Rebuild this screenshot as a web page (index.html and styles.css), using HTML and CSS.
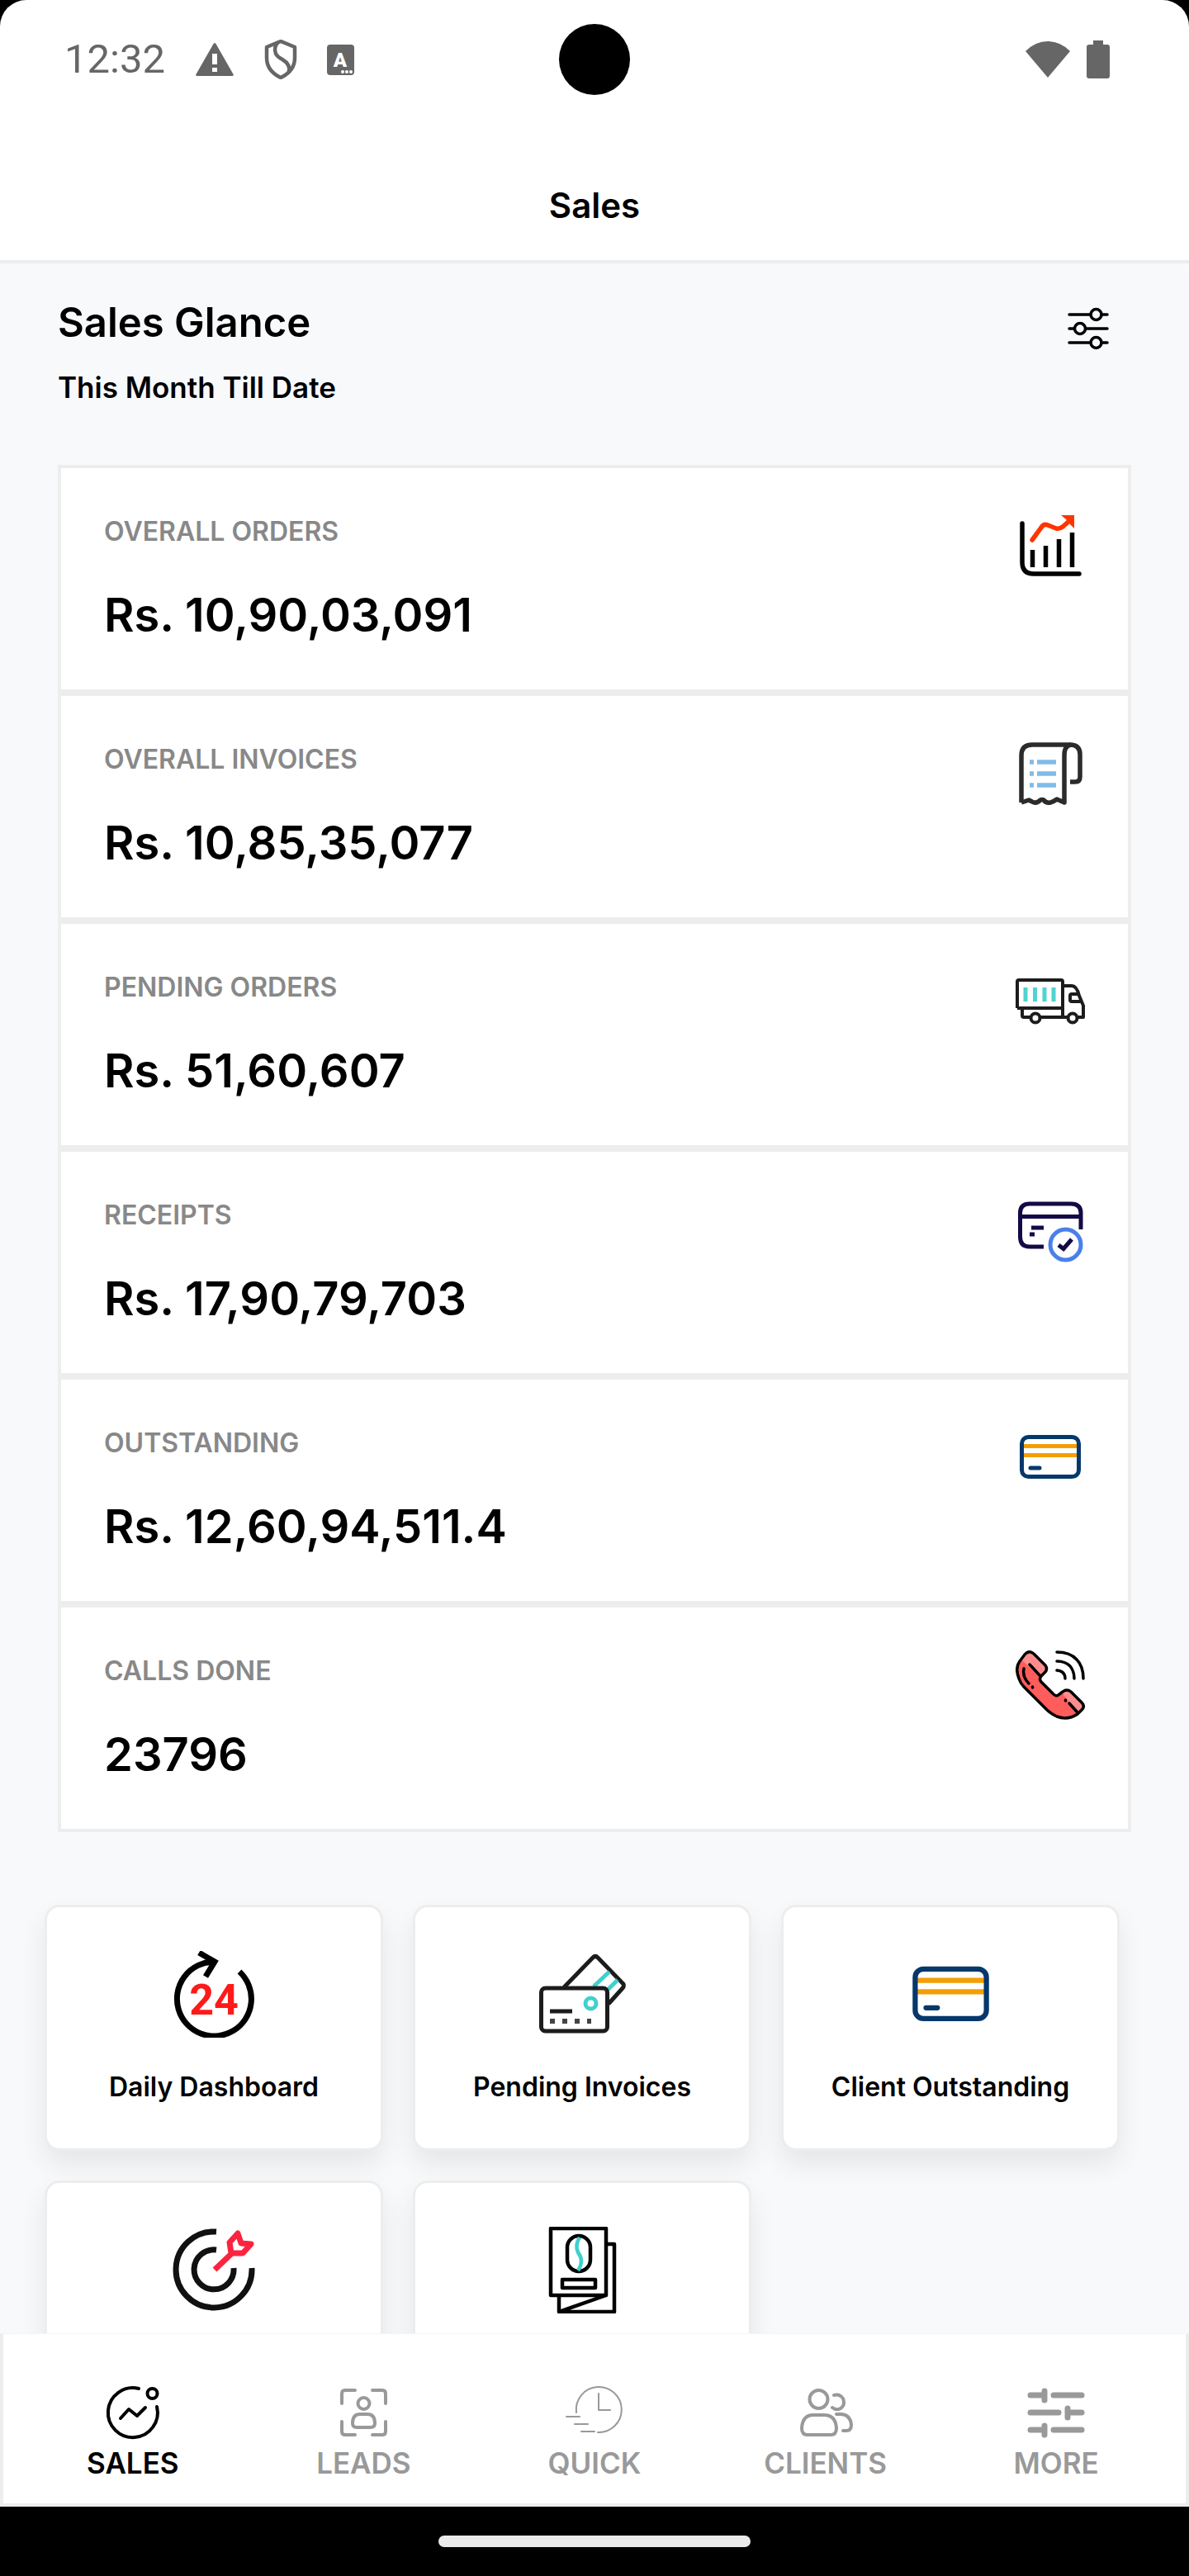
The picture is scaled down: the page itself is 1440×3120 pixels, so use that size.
FILE: index.html
```html
<!DOCTYPE html>
<html lang="en">
<head>
    <meta charset="utf-8">
    <title>Sales</title>
    <meta name="viewport" content="width=device-width, initial-scale=1.0">
    <link rel="stylesheet" href="styles.css">
</head>
<body>
    <!-- shared by the outstanding row and tile -->
    <svg class="sprite" aria-hidden="true">
        <symbol id="credit-card" viewBox="0 0 84 84">
            <path d="M9 28.5H75M9 39.5H75" stroke="#f29f05" stroke-width="5"/>
            <rect x="7.5" y="17.5" width="69" height="48" rx="8" fill="none" stroke="#05386b" stroke-width="5"/>
            <path d="M18 55H29" stroke="#05386b" stroke-width="5" stroke-linecap="round"/>
        </symbol>
    </svg>

    <header class="top">
        <div class="status">
            <span class="time">12:32</span>
            <div class="status-icons">
                <svg width="48" height="44" viewBox="0 0 48 44">
                    <path d="M24 2Q25 2 26 4L46 39Q48 42 45 42H3Q0 42 2 39L22 4Q23 2 24 2Z" fill="#666"/>
                    <path d="M24 15V28M24 32V37" stroke="#fff" stroke-width="6"/>
                </svg>
                <svg width="40" height="48" viewBox="0 0 40 48">
                    <path d="M20 2L37 9V22Q37 38 20 46Q3 38 3 22V9Z" fill="none" stroke="#666" stroke-width="4.5" stroke-linejoin="round"/>
                    <path d="M17 3Q11 9 14 17Q16 21 22 24Q32 30 30 39" fill="none" stroke="#666" stroke-width="4.5"/>
                </svg>
                <svg width="33" height="37" viewBox="0 0 33 37">
                    <rect width="33" height="37" rx="4" fill="#666"/>
                    <text x="16" y="27" class="badge-letter">A</text>
                    <g fill="#fff"><circle cx="19" cy="33" r="2"/><circle cx="24" cy="33" r="2"/><circle cx="29" cy="33" r="2"/></g>
                </svg>
            </div>
            <span class="camera"></span>
            <div class="status-right">
                <svg width="54" height="46" viewBox="0 0 54 46">
                    <path d="M27 45L0 13Q12 1 27 1Q42 1 54 13Z" fill="#666"/>
                </svg>
                <svg width="28" height="46" viewBox="0 0 28 46">
                    <path d="M8 0H20V5H25Q28 5 28 8V43Q28 46 25 46H3Q0 46 0 43V8Q0 5 3 5H8Z" fill="#666"/>
                </svg>
            </div>
        </div>
        <h1 class="title">Sales</h1>
    </header>

    <main>
        <section class="glance">
            <div>
                <h2>Sales Glance</h2>
                <p class="period">This Month Till Date</p>
            </div>
            <button class="filter" aria-label="Filter">
                <svg width="50" height="52" viewBox="0 0 50 52" fill="none" stroke="#000" stroke-width="3.5" stroke-linecap="round">
                    <path d="M2 9H28M41 9H48M2 26H8M22 26H48M2 43H28M41 43H48"/>
                    <circle cx="34.5" cy="9" r="6.5"/>
                    <circle cx="15" cy="26" r="6.5"/>
                    <circle cx="34.5" cy="43" r="6.5"/>
                </svg>
            </button>
        </section>

        <section class="stats">
            <article class="stat">
                <div>
                    <h3>OVERALL ORDERS</h3>
                    <p class="amount">Rs. 10,90,03,091</p>
                </div>
                <svg class="stat-icon" viewBox="0 0 84 84" fill="none" stroke="#000" stroke-width="5.5">
                    <path d="M8 15V62Q8 76 22 76H77" stroke-linecap="round"/>
                    <path d="M20.5 47V68M36.5 42V68M52.5 34V68M68.5 26V68"/>
                    <path d="M20 35L31 20Q34 15 39 17L49 21Q53 22 57 19L66 11" stroke="#ff3400" stroke-linecap="round"/>
                    <path d="M55 5H71V21L65 15L61 10Z" fill="#ff3400" stroke="none"/>
                </svg>
            </article>
            <article class="stat">
                <div>
                    <h3>OVERALL INVOICES</h3>
                    <p class="amount">Rs. 10,85,35,077</p>
                </div>
                <svg class="stat-icon" viewBox="0 0 84 84" fill="none" stroke="#2b2b2b" stroke-width="5.5" stroke-linejoin="round">
                    <path d="M7 77V20Q7 7 20 7H66Q78 7 78 19V46Q78 52 72 52H66"/>
                    <path d="M67 7Q59 8 59 20V77L50 73Q46 76 42 77Q37 78 34 74Q32 73 30 74Q25 79 20 76L16 74L7 77"/>
                    <path d="M26 28H49M26 42H49M26 56H49M17 28H22M17 42H22M17 56H22" stroke="#80bce8"/>
                </svg>
            </article>
            <article class="stat">
                <div>
                    <h3>PENDING ORDERS</h3>
                    <p class="amount">Rs. 51,60,607</p>
                </div>
                <svg class="stat-icon" viewBox="0 0 84 84" fill="none" stroke="#1c1c1c" stroke-width="4" stroke-linejoin="round">
                    <path d="M2 50V18Q2 16 4 16H55Q57 16 57 18V61M2 50H57M8 50V59Q8 61 10 61H18M30 61H63M75 61H82V47L77 35Q74 23 68 23H57"/>
                    <path d="M77 33H68Q66 33 66 35V40Q66 42 68 42H81"/>
                    <circle cx="24" cy="62" r="5.5"/>
                    <circle cx="69" cy="62" r="5.5"/>
                    <path d="M12 25V42M23.5 25V42M35 25V42M46 25V42" stroke="#4fd3d0" stroke-width="5"/>
                </svg>
            </article>
            <article class="stat">
                <div>
                    <h3>RECEIPTS</h3>
                    <p class="amount">Rs. 17,90,79,703</p>
                </div>
                <svg class="stat-icon" viewBox="0 0 84 84" fill="none" stroke="#140a46" stroke-width="5">
                    <path d="M34 63H17Q5.5 63 5.5 51V22Q5.5 11 17 11H67Q79 11 79 22V42M5.500 26.5H79M19 40H34M17 48H23"/>
                    <circle cx="60.5" cy="60.5" r="18.5" stroke="#4a80e8"/>
                    <path d="M52 61L58 65.500L68 54"/>
                </svg>
            </article>
            <article class="stat">
                <div>
                    <h3>OUTSTANDING</h3>
                    <p class="amount">Rs. 12,60,94,511.4</p>
                </div>
                <svg class="stat-icon"><use href="#credit-card"/></svg>
            </article>
            <article class="stat">
                <div>
                    <h3>CALLS DONE</h3>
                    <p class="amount">23796</p>
                </div>
                <svg class="stat-icon" viewBox="0 0 84 84" stroke-linecap="round" stroke-linejoin="round">
                    <path d="M22 4Q16 -1 11 5L5 13Q-1 21 4 34Q6 40 10 44L37 71Q43 77 50 80Q63 85 75 77L81 71Q84 67 80 63L67 50Q62 46 57 50L53 53Q49 57 45 52L31 38Q28 35 31 31L36 26Q39 22 36 18Z" fill="#ff5c5c"/>
                    <path d="M22 4Q16 -1 11 5L7 11L29 32L36 26Q39 22 36 18ZM56 51L76 77L81 71Q84 67 80 63L67 50Q62 46 56 51Z" fill="#ff8d8d"/>
                    <path d="M22 4Q16 -1 11 5L5 13Q-1 21 4 34Q6 40 10 44L37 71Q43 77 50 80Q63 85 75 77L81 71Q84 67 80 63L67 50Q62 46 57 50L53 53Q49 57 45 52L31 38Q28 35 31 31L36 26Q39 22 36 18ZM17 17L29 30M10 22Q8 32 16 40M20.5 44V45M60.5 60V61M65 64L74 74" fill="none" stroke="#000" stroke-width="3.5"/>
                    <path d="M50 2Q66 2 74 11Q82 19 82 34M50 13Q60 13 66 19Q71 25 71 34M50 24Q60 25 60 34" fill="none" stroke="#000" stroke-width="3.5"/>
                </svg>
            </article>
        </section>

        <section class="tiles">
            <a class="tile" href="#">
                <svg class="tile-icon" viewBox="0 0 105 105">
                    <path d="M83 25A45 45 0 1 1 52 13M34 2L53 13L42 31" fill="none" stroke="#000" stroke-width="7"/>
                    <text x="52" y="77" class="hours">24</text>
                </svg>
                <span>Daily Dashboard</span>
            </a>
            <a class="tile" href="#">
                <svg class="tile-icon" viewBox="0 0 105 105" fill="none" stroke="#1c1c1c" stroke-width="5">
                    <path d="M30 44L65 8Q68 5 71 8L102 40Q103 43 101 45L84 64"/>
                    <path d="M85 25L66 43M95 35L83 47" stroke="#40d0ce"/>
                    <rect x="2.5" y="45" width="80" height="52" rx="5"/>
                    <circle cx="62.5" cy="63.5" r="6.5" stroke="#40d0ce"/>
                    <path d="M13 73H40"/>
                    <path d="M13 85H63" stroke="#444" stroke-width="6" stroke-dasharray="6 9"/>
                </svg>
                <span>Pending Invoices</span>
            </a>
            <a class="tile" href="#">
                <svg class="tile-icon"><use href="#credit-card"/></svg>
                <span>Client Outstanding</span>
            </a>
            <a class="tile" href="#">
                <svg class="tile-icon" viewBox="0 0 105 105" fill="none" stroke="#111" stroke-width="7">
                    <path d="M55 6A46 46 0 1 0 98 50M55 28A24 24 0 1 0 76 50"/>
                    <path d="M53 52L74 32M73 32L71 19L81 8L85 20L97 21L87 32Z" stroke="#fb2440" stroke-linejoin="round"/>
                </svg>
            </a>
            <a class="tile" href="#">
                <svg class="tile-icon" viewBox="0 0 105 105" fill="none" stroke="#000" stroke-width="4.5" stroke-linejoin="round">
                    <path d="M14 2H81V83H14ZM82 21H91V103H24V83M81 83L24 103"/>
                    <rect x="34" y="11" width="28" height="43" rx="14"/>
                    <rect x="28" y="64" width="40" height="10"/>
                    <path d="M49 13Q43 22 47 31Q55 41 47 53" stroke="#40d0ce"/>
                </svg>
            </a>
        </section>
    </main>

    <nav class="tabs">
        <a class="tab active" href="#">
            <svg viewBox="0 0 70 70" stroke-width="4">
                <path d="M42 6A30 30 0 1 0 64 28M20 42L30 31L40 39L50 29"/>
                <circle cx="58.5" cy="12" r="6"/>
            </svg>
            SALES
        </a>
        <a class="tab" href="#">
            <svg viewBox="0 0 70 70" stroke-width="4">
                <path d="M25 8H13Q9 8 9 12V24M46 8H58Q62 8 62 12V24M9 46V58Q9 62 13 62H25M62 46V58Q62 62 58 62H46"/>
                <circle cx="35.5" cy="24" r="7"/>
                <path d="M31 37H40Q49 37 49 48Q49 53 44 53H27Q22 53 22 48Q22 37 31 37Z"/>
            </svg>
            LEADS
        </a>
        <a class="tab" href="#">
            <svg viewBox="0 0 70 70" stroke-width="2">
                <path d="M13 35A27.5 27.5 0 1 1 39 59M40 12V32H54M1 40H17M11 49H27M19 58H35"/>
            </svg>
            QUICK
        </a>
        <a class="tab" href="#">
            <svg viewBox="0 0 70 70" stroke-width="4">
                <circle cx="26.5" cy="19" r="11"/>
                <path d="M20 38H33Q47 38 48 54Q48 62 41 62H13Q6 62 6 54Q7 38 20 38Z"/>
                <path d="M45 14Q52 12 56 18Q59 26 53 30Q48 33 43 29M48 37H54Q65 38 66 50Q66 57 60 57H56"/>
            </svg>
            CLIENTS
        </a>
        <a class="tab" href="#">
            <svg viewBox="0 0 70 70" stroke-width="7">
                <path d="M4 14H21M21 9V20M32 14H66M4 35H38M49 30V41M49 35H66M4 56H21M21 51V62M32 56H66"/>
            </svg>
            MORE
        </a>
    </nav>
    <footer class="home-bar"><span></span></footer>
</body>
</html>
```

FILE: styles.css
```css
* {
    margin: 0;
    padding: 0;
    box-sizing: border-box;
}

body {
    display: flex;
    flex-direction: column;
    height: 100vh;
    overflow: hidden;
    background-color: #000;
    font-family: Inter, sans-serif;
    font-weight: 600;
    color: #000;
}

a {
    color: inherit;
    text-decoration: none;
}

svg {
    display: block;
}

.sprite {
    position: absolute;
    width: 0;
    height: 0;
}

/* header */
.top {
    background-color: #fff;
    border-bottom: 4px solid #ededed;
    border-radius: 32px 32px 0 0;
}

.status {
    position: relative;
    display: flex;
    align-items: center;
    height: 144px;
    padding: 0 96px 0 78px;
}

.time {
    font-family: Roboto, sans-serif;
    font-size: 49px;
    font-weight: 400;
    line-height: 60px;
    color: #666;
}

.status-icons {
    display: flex;
    align-items: center;
    gap: 36px;
    margin-left: 36px;
}

.badge-letter {
    font-family: Roboto, sans-serif;
    font-size: 24px;
    font-weight: 900;
    fill: #fff;
    text-anchor: middle;
}

.camera {
    position: absolute;
    left: 50%;
    top: 50%;
    width: 86px;
    height: 86px;
    border-radius: 50%;
    background-color: #000;
    transform: translate(-50%, -50%);
}

.status-right {
    display: flex;
    gap: 20px;
    margin-left: auto;
}

.title {
    padding: 75px 0 36px;
    font-size: 42px;
    font-weight: 600;
    line-height: 60px;
    text-align: center;
}

/* content */
main {
    flex: 1;
    min-height: 0;
    overflow: hidden;
    background-color: #f8f9fb;
}

.glance {
    display: flex;
    justify-content: space-between;
    align-items: flex-start;
    padding: 42px 97px 70px 70px;
}

.glance h2 {
    font-size: 49px;
    font-weight: 600;
    line-height: 60px;
}

.period {
    margin-top: 24px;
    font-size: 35px;
    line-height: 48px;
}

.filter {
    margin-top: 11px;
    border: none;
    background: none;
}

.stats {
    margin: 0 70px;
}

.stat {
    display: flex;
    justify-content: space-between;
    align-items: flex-start;
    padding: 52px;
    border: 4px solid #ededed;
    background-color: #fff;
}

.stat h3 {
    font-size: 32px;
    font-weight: 600;
    line-height: 50px;
    color: #888;
}

.amount {
    margin-top: 38px;
    font-size: 56px;
    line-height: 76px;
}

.stat-icon {
    width: 84px;
    height: 84px;
}

.tiles {
    display: grid;
    grid-template-columns: 1fr 1fr 1fr;
    gap: 36px;
    padding: 88px 84px 88px 54px;
}

.tile {
    display: flex;
    flex-direction: column;
    align-items: center;
    gap: 36px;
    min-height: 298px;
    padding-top: 53px;
    border: 3px solid #ededed;
    border-radius: 18px;
    background-color: #fff;
    box-shadow: 0 16px 32px rgba(0, 0, 0, 0.08);
    font-size: 32px;
    line-height: 48px;
}

.tile-icon {
    width: 105px;
    height: 105px;
}

.hours {
    font-family: Roboto, sans-serif;
    font-size: 52px;
    font-weight: 700;
    fill: #ff1a1a;
    text-anchor: middle;
}

/* bottom tabs */
.tabs {
    display: flex;
    padding: 60px 17px 25px;
    border: 4px solid #ededed;
    border-top: 1px solid #f5f5f5;
    background-color: #fff;
}

.tab {
    flex: 1;
    display: flex;
    flex-direction: column;
    align-items: center;
    gap: 2px;
    font-size: 35px;
    line-height: 48px;
    color: #999;
}

.tab svg {
    width: 70px;
    height: 70px;
    fill: none;
    stroke: currentColor;
    stroke-linecap: round;
    stroke-linejoin: round;
}

.active {
    color: #000;
}

.home-bar {
    display: flex;
    justify-content: center;
    padding: 35px 0;
}

.home-bar span {
    width: 378px;
    height: 14px;
    border-radius: 7px;
    background-color: #eaeaea;
}
```
